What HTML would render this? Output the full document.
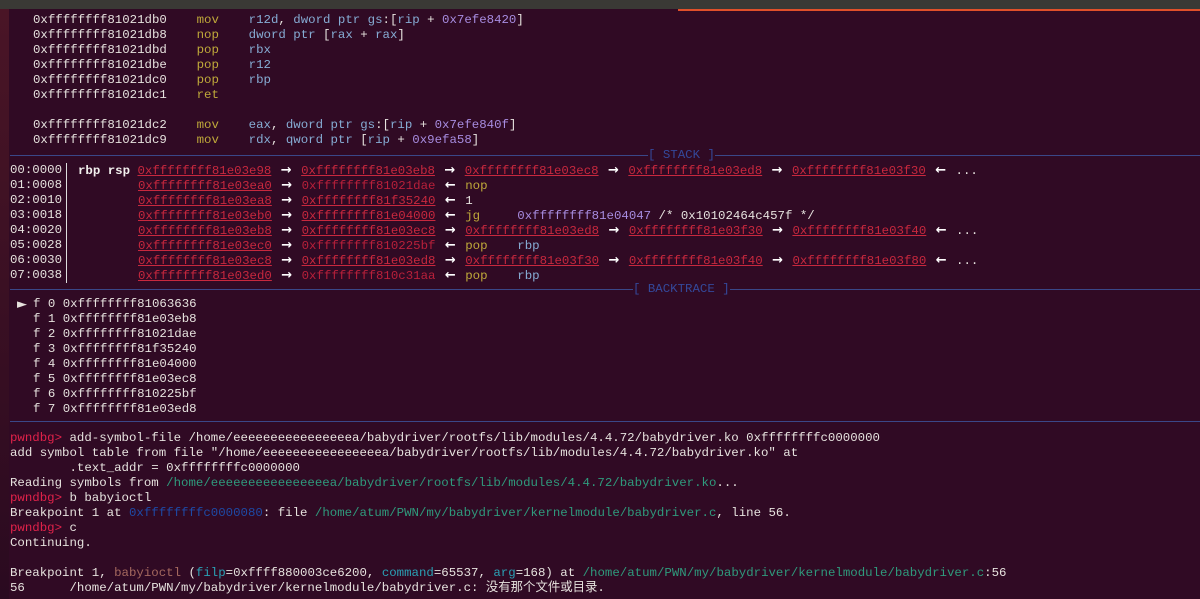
<!DOCTYPE html>
<html><head><meta charset="utf-8"><style>
body{margin:0;width:1200px;height:599px;background:#300a24;overflow:hidden;position:relative;font-family:"Liberation Mono","Noto Sans CJK SC",monospace;font-size:12.4px;color:#e6e2de}
.r{position:absolute;white-space:pre;line-height:15px;height:15px}
.y{color:#bfa93a}.b{color:#86acd4}.p{color:#a78ce0}.u{color:#c8283e;text-decoration:underline}.d{color:#b8203a}
.rd{color:#e0224a}.g{color:#2f9a7c}.bl{color:#1e4aa6}.br{color:#a4685e}.t{color:#2aa0b4}.w{color:#f2f0ee;font-weight:bold}
.a{display:inline-block;width:14.9px;text-align:center;font-weight:bold;font-family:"DejaVu Sans",sans-serif;font-size:13px;color:#fff}
.sep{position:absolute;left:10px;right:0;height:1px;background:#3a4788}
.lab{position:absolute;color:#34489a;background:#300a24;white-space:pre;line-height:15px}
</style></head><body>
<div style="position:absolute;left:0;top:0;width:1200px;height:9px;background:#3a3935"></div>
<div style="position:absolute;left:678px;top:9px;width:522px;height:2px;background:#e0502a"></div>
<div style="position:absolute;left:0;top:9px;width:9px;height:590px;background:linear-gradient(#4a1526,#2a0a20)"></div>

<div class="r" style="left:33px;top:13px">0xffffffff81021db0    <span class="y">mov</span>    <span class="b">r12d</span>, <span class="b">dword ptr gs</span>:[<span class="b">rip</span> + <span class="p">0x7efe8420</span>]</div>
<div class="r" style="left:33px;top:28px">0xffffffff81021db8    <span class="y">nop</span>    <span class="b">dword ptr</span> [<span class="b">rax</span> + <span class="b">rax</span>]</div>
<div class="r" style="left:33px;top:43px">0xffffffff81021dbd    <span class="y">pop</span>    <span class="b">rbx</span></div>
<div class="r" style="left:33px;top:58px">0xffffffff81021dbe    <span class="y">pop</span>    <span class="b">r12</span></div>
<div class="r" style="left:33px;top:73px">0xffffffff81021dc0    <span class="y">pop</span>    <span class="b">rbp</span></div>
<div class="r" style="left:33px;top:88px">0xffffffff81021dc1    <span class="y">ret</span></div>
<div class="r" style="left:33px;top:118px">0xffffffff81021dc2    <span class="y">mov</span>    <span class="b">eax</span>, <span class="b">dword ptr gs</span>:[<span class="b">rip</span> + <span class="p">0x7efe840f</span>]</div>
<div class="r" style="left:33px;top:133px">0xffffffff81021dc9    <span class="y">mov</span>    <span class="b">rdx</span>, <span class="b">qword ptr</span> [<span class="b">rip</span> + <span class="p">0x9efa58</span>]</div>

<div class="sep" style="top:155px"></div>
<div class="lab" style="left:648px;top:148px">[ STACK ]</div>
<div style="position:absolute;left:66px;top:163px;width:1px;height:120px;background:#ddd"></div>

<div class="r" style="left:10px;top:163px">00:0000</div>
<div class="r" style="left:78px;top:163px"><span class="w">rbp rsp</span> <span class="u">0xffffffff81e03e98</span> <span class="a">→</span> <span class="u">0xffffffff81e03eb8</span> <span class="a">→</span> <span class="u">0xffffffff81e03ec8</span> <span class="a">→</span> <span class="u">0xffffffff81e03ed8</span> <span class="a">→</span> <span class="u">0xffffffff81e03f30</span> <span class="a">←</span> ...</div>
<div class="r" style="left:10px;top:178px">01:0008</div>
<div class="r" style="left:138px;top:178px"><span class="u">0xffffffff81e03ea0</span> <span class="a">→</span> <span class="d">0xffffffff81021dae</span> <span class="a">←</span> <span class="y">nop</span></div>
<div class="r" style="left:10px;top:193px">02:0010</div>
<div class="r" style="left:138px;top:193px"><span class="u">0xffffffff81e03ea8</span> <span class="a">→</span> <span class="u">0xffffffff81f35240</span> <span class="a">←</span> 1</div>
<div class="r" style="left:10px;top:208px">03:0018</div>
<div class="r" style="left:138px;top:208px"><span class="u">0xffffffff81e03eb0</span> <span class="a">→</span> <span class="u">0xffffffff81e04000</span> <span class="a">←</span> <span class="y">jg</span>     <span class="p">0xffffffff81e04047</span> /* 0x10102464c457f */</div>
<div class="r" style="left:10px;top:223px">04:0020</div>
<div class="r" style="left:138px;top:223px"><span class="u">0xffffffff81e03eb8</span> <span class="a">→</span> <span class="u">0xffffffff81e03ec8</span> <span class="a">→</span> <span class="u">0xffffffff81e03ed8</span> <span class="a">→</span> <span class="u">0xffffffff81e03f30</span> <span class="a">→</span> <span class="u">0xffffffff81e03f40</span> <span class="a">←</span> ...</div>
<div class="r" style="left:10px;top:238px">05:0028</div>
<div class="r" style="left:138px;top:238px"><span class="u">0xffffffff81e03ec0</span> <span class="a">→</span> <span class="d">0xffffffff810225bf</span> <span class="a">←</span> <span class="y">pop</span>    <span class="b">rbp</span></div>
<div class="r" style="left:10px;top:253px">06:0030</div>
<div class="r" style="left:138px;top:253px"><span class="u">0xffffffff81e03ec8</span> <span class="a">→</span> <span class="u">0xffffffff81e03ed8</span> <span class="a">→</span> <span class="u">0xffffffff81e03f30</span> <span class="a">→</span> <span class="u">0xffffffff81e03f40</span> <span class="a">→</span> <span class="u">0xffffffff81e03f80</span> <span class="a">←</span> ...</div>
<div class="r" style="left:10px;top:268px">07:0038</div>
<div class="r" style="left:138px;top:268px"><span class="u">0xffffffff81e03ed0</span> <span class="a">→</span> <span class="d">0xffffffff810c31aa</span> <span class="a">←</span> <span class="y">pop</span>    <span class="b">rbp</span></div>

<div class="sep" style="top:289px"></div>
<div class="lab" style="left:633px;top:282px">[ BACKTRACE ]</div>

<div class="r" style="left:17px;top:297px;font-family:'DejaVu Sans',sans-serif;font-size:13px">►</div>
<div class="r" style="left:33px;top:297px">f 0 0xffffffff81063636</div>
<div class="r" style="left:33px;top:312px">f 1 0xffffffff81e03eb8</div>
<div class="r" style="left:33px;top:327px">f 2 0xffffffff81021dae</div>
<div class="r" style="left:33px;top:342px">f 3 0xffffffff81f35240</div>
<div class="r" style="left:33px;top:357px">f 4 0xffffffff81e04000</div>
<div class="r" style="left:33px;top:372px">f 5 0xffffffff81e03ec8</div>
<div class="r" style="left:33px;top:387px">f 6 0xffffffff810225bf</div>
<div class="r" style="left:33px;top:402px">f 7 0xffffffff81e03ed8</div>

<div class="sep" style="top:421px"></div>

<div class="r" style="left:10px;top:431px"><span class="rd">pwndbg&gt;</span> add-symbol-file /home/eeeeeeeeeeeeeeeea/babydriver/rootfs/lib/modules/4.4.72/babydriver.ko 0xffffffffc0000000</div>
<div class="r" style="left:10px;top:446px">add symbol table from file "/home/eeeeeeeeeeeeeeeea/babydriver/rootfs/lib/modules/4.4.72/babydriver.ko" at</div>
<div class="r" style="left:10px;top:461px">        .text_addr = 0xffffffffc0000000</div>
<div class="r" style="left:10px;top:476px">Reading symbols from <span class="g">/home/eeeeeeeeeeeeeeeea/babydriver/rootfs/lib/modules/4.4.72/babydriver.ko</span>...</div>
<div class="r" style="left:10px;top:491px"><span class="rd">pwndbg&gt;</span> b babyioctl</div>
<div class="r" style="left:10px;top:506px">Breakpoint 1 at <span class="bl">0xffffffffc0000080</span>: file <span class="g">/home/atum/PWN/my/babydriver/kernelmodule/babydriver.c</span>, line 56.</div>
<div class="r" style="left:10px;top:521px"><span class="rd">pwndbg&gt;</span> c</div>
<div class="r" style="left:10px;top:536px">Continuing.</div>
<div class="r" style="left:10px;top:566px">Breakpoint 1, <span class="br">babyioctl</span> (<span class="t">filp</span>=0xffff880003ce6200, <span class="t">command</span>=65537, <span class="t">arg</span>=168) at <span class="g">/home/atum/PWN/my/babydriver/kernelmodule/babydriver.c</span>:56</div>
<div class="r" style="left:10px;top:581px">56      /home/atum/PWN/my/babydriver/kernelmodule/babydriver.c: 没有那个文件或目录.</div>
</body></html>
